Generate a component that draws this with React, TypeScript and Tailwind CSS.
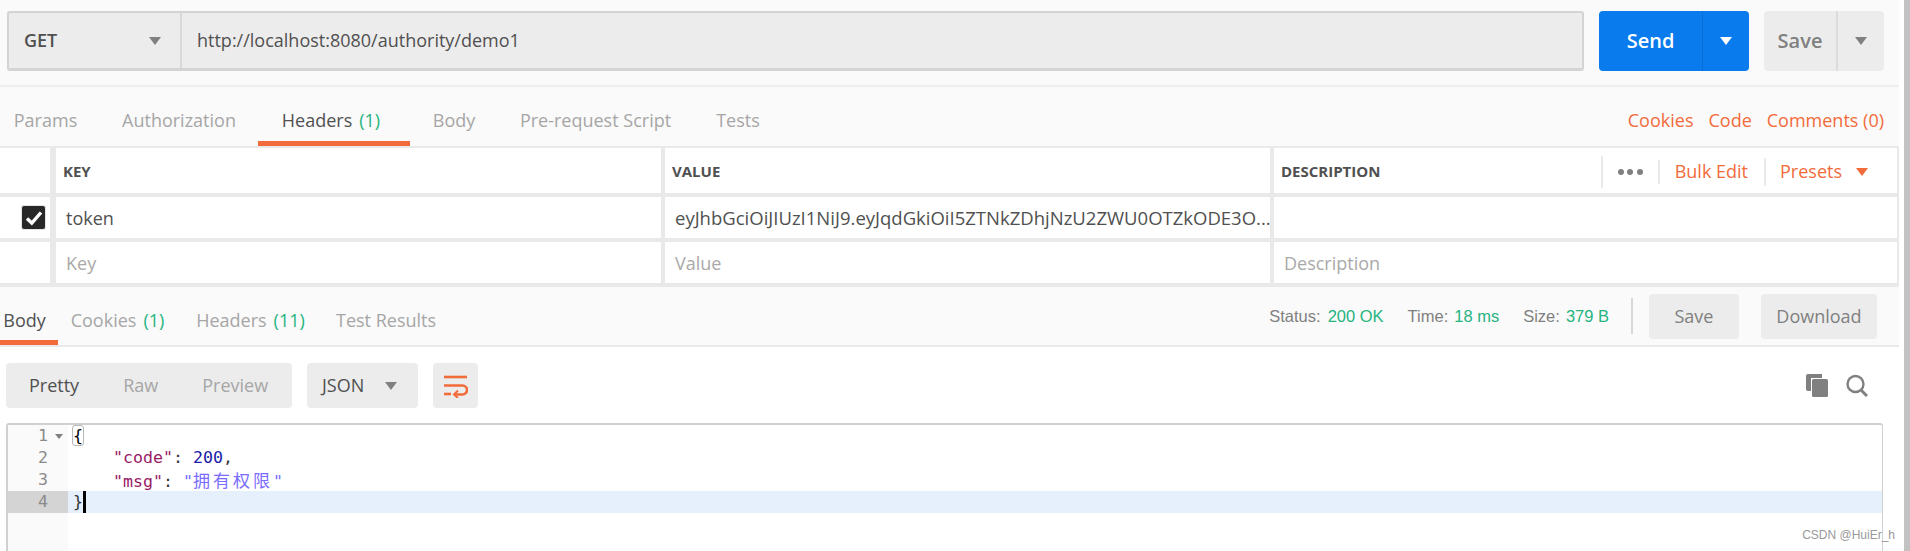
import React from "react";

function Caret({ color, className }: { color: string; className?: string }) {
  return (
    <svg width="12" height="8" viewBox="0 0 12 8" className={className}>
      <path d="M0 0 L12 0 L6 8 Z" fill={color} />
    </svg>
  );
}

function Tab({ label, count, active, className }: { label: string; count?: string; active?: boolean; className: string }) {
  return (
    <div className={`relative flex h-full items-center justify-center whitespace-nowrap pt-[8px] ${active ? "text-[#505050]" : "text-[#a6a6a6]"} ${className}`}>
      <span>{label}</span>
      {count && <span className="ml-[7px] text-[#26b47f]">{count}</span>}
      {active && <div className="absolute bottom-0 left-0 right-0 h-[5px] bg-[#f26b3a]" />}
    </div>
  );
}

function Row({ h, cells }: { h: string; cells: React.ReactNode[] }) {
  return (
    <div className={`flex ${h}`}>
      <div className="flex w-[50px] items-center justify-end bg-white pr-[4px]">{cells[0]}</div>
      <div className="ml-[6px] flex w-[605px] items-center bg-white pl-[10px] pt-[1px]">{cells[1]}</div>
      <div className="ml-[4px] flex w-[605px] items-center bg-white pl-[10px] pt-[1px]">{cells[2]}</div>
      <div className="ml-[4px] flex w-[623px] items-center bg-white pl-[10px] pt-[1px]">{cells[3]}</div>
    </div>
  );
}

function Head({ children }: { children: React.ReactNode }) {
  return <span className="text-[15px] font-bold text-[#505050]">{children}</span>;
}

export default function App() {
  return (
    <div className="relative flex h-[551px] w-[1910px] overflow-hidden bg-white text-[18px] [font-family:'Open_Sans',sans-serif]">
      <div className="w-[1899px] shrink-0">
        {/* URL bar */}
        <div className="flex h-[87px] border-b-2 border-[#efefef] bg-[#fafafa] pl-[7px] pt-[11px]">
          <div className="flex h-[60px] w-[1577px] rounded-[3px] border-2 border-b-[3px] border-[#d4d4d4] bg-[#ececec] text-[#505050]">
            <div className="flex w-[173px] items-center justify-between border-r-2 border-[#d8d8d8] pl-[15px] pr-[19px] font-semibold">
              <span>GET</span>
              <Caret color="#808080" />
            </div>
            <div className="flex items-center pl-[15px] text-[#505050]">http://localhost:8080/authority/demo1</div>
          </div>
          <div className="ml-[15px] flex h-[60px] w-[150px] rounded-[4px] bg-[#097bed] text-white">
            <div className="flex w-[104px] items-center justify-center border-r border-[#0a6fd4] text-[20px] font-semibold">Send</div>
            <div className="flex flex-1 items-center justify-center"><Caret color="#ffffff" /></div>
          </div>
          <div className="ml-[15px] flex h-[60px] w-[120px] rounded-[4px] bg-[#ececec] text-[#808080]">
            <div className="flex w-[74px] items-center justify-center border-r-2 border-[#dcdcdc] text-[20px] font-semibold">Save</div>
            <div className="flex flex-1 items-center justify-center"><Caret color="#808080" /></div>
          </div>
        </div>

        {/* Request tabs */}
        <div className="flex h-[61px] items-stretch border-b-[2px] border-[#e9e9e9] bg-[#fafafa]">
          <Tab label="Params" className="ml-[14px] w-[63px]" />
          <Tab label="Authorization" className="ml-[45px] w-[114px]" />
          <Tab label="Headers" count="(1)" active className="ml-[22px] w-[152px] pr-[6px]" />
          <Tab label="Body" className="ml-[23px] w-[42px]" />
          <Tab label="Pre-request Script" className="ml-[45px] w-[151px]" />
          <Tab label="Tests" className="ml-[45px] w-[44px]" />
          <div className="ml-auto flex items-center pr-[15px] pt-[8px] text-[#f26b3a]">
            <span>Cookies</span>
            <span className="ml-[15px]">Code</span>
            <span className="ml-[15px]">Comments (0)</span>
          </div>
        </div>

        {/* Headers table */}
        <div className="flex flex-col gap-[4px] bg-[#e9e9e9] pb-[4px]">
          <div className="flex h-[45px]">
            <div className="w-[50px] bg-white" />
            <div className="ml-[6px] flex w-[605px] items-center bg-white pl-[7px] pt-[2px]"><Head>KEY</Head></div>
            <div className="ml-[4px] flex w-[605px] items-center bg-white pl-[7px] pt-[2px]"><Head>VALUE</Head></div>
            <div className="ml-[4px] flex w-[623px] items-center bg-white pl-[7px] pt-[2px]">
              <Head>DESCRIPTION</Head>
              <div className="ml-auto h-[32px] w-[2px] bg-[#e9e9e9]" />
              <div className="ml-[15px] flex w-[25px] justify-between">
                <span className="h-[6px] w-[6px] rounded-full bg-[#808080]" />
                <span className="h-[6px] w-[6px] rounded-full bg-[#808080]" />
                <span className="h-[6px] w-[6px] rounded-full bg-[#808080]" />
              </div>
              <div className="ml-[15px] h-[24px] w-[2px] bg-[#e9e9e9]" />
              <span className="ml-[15px] text-[#f26b3a]">Bulk Edit</span>
              <div className="ml-[16px] h-[28px] w-[2px] bg-[#e9e9e9]" />
              <span className="ml-[14px] text-[#f26b3a]">Presets</span>
              <Caret color="#f26b3a" className="ml-[14px] mr-[29px]" />
            </div>
          </div>
          <Row
            h="h-[41px]"
            cells={[
              <div className="flex h-[25px] w-[25px] items-center justify-center rounded-[3px] border border-[#e5e5e5] bg-[#282828]">
                <svg width="18" height="16" viewBox="0 0 18 16"><path d="M2 8.5 L6.8 13 L16 2.5" fill="none" stroke="#fff" strokeWidth="3.4" /></svg>
              </div>,
              <span className="text-[#505050]">token</span>,
              <span className="whitespace-nowrap text-[18.5px] text-[#505050]">eyJhbGciOiJIUzI1NiJ9.eyJqdGkiOiI5ZTNkZDhjNzU2ZWU0OTZkODE3O...</span>,
              null,
            ]}
          />
          <Row
            h="h-[41px]"
            cells={[
              null,
              <span className="text-[#a9a9a9]">Key</span>,
              <span className="text-[#a9a9a9]">Value</span>,
              <span className="text-[#a9a9a9]">Description</span>,
            ]}
          />
        </div>

        {/* Response tabs */}
        <div className="flex h-[60px] items-stretch border-b-[2px] border-[#e9e9e9] bg-[#fafafa]">
          <Tab label="Body" active className="w-[58px] pr-[9px]" />
          <Tab label="Cookies" count="(1)" className="ml-[12px] w-[95px]" />
          <Tab label="Headers" count="(11)" className="ml-[31px] w-[109px]" />
          <Tab label="Test Results" className="ml-[31px] w-[100px]" />
          <div className="ml-auto flex items-center pr-[22px] text-[16.5px] [font-family:'Liberation_Sans',sans-serif]">
            <span className="text-[#808080]">Status:</span>
            <span className="ml-[7px] text-[#26b47f]">200 OK</span>
            <span className="ml-[24px] text-[#808080]">Time:</span>
            <span className="ml-[6px] text-[#26b47f]">18 ms</span>
            <span className="ml-[24px] text-[#808080]">Size:</span>
            <span className="ml-[6px] text-[#26b47f]">379 B</span>
            <div className="ml-[22px] h-[36px] w-[2px] bg-[#d8d8d8]" />
            <div className="ml-[16px] flex h-[45px] w-[90px] items-center justify-center rounded-[4px] bg-[#ececec] text-[18px] text-[#808080] [font-family:'Open_Sans',sans-serif]">Save</div>
            <div className="ml-[22px] flex h-[45px] w-[116px] items-center justify-center rounded-[4px] bg-[#ececec] text-[18px] text-[#808080] [font-family:'Open_Sans',sans-serif]">Download</div>
          </div>
        </div>

        {/* Viewer toolbar */}
        <div className="flex h-[76px] items-center pb-[15px] pl-[6px] pr-[31px] pt-[16px]">
          <div className="flex h-[45px] w-[286px] items-center rounded-[4px] bg-[#ececec]">
            <span className="ml-[23px] text-[#505050]">Pretty</span>
            <span className="ml-[44px] text-[#a6a6a6]">Raw</span>
            <span className="ml-[44px] text-[#a6a6a6]">Preview</span>
          </div>
          <div className="ml-[15px] flex h-[45px] w-[111px] items-center justify-between rounded-[4px] bg-[#ececec] pl-[15px] pr-[21px] text-[#505050]">
            <span>JSON</span>
            <Caret color="#808080" />
          </div>
          <div className="ml-[15px] flex h-[45px] w-[45px] items-center justify-center rounded-[4px] bg-[#ececec]">
            <svg width="25" height="24" viewBox="0 0 25 24" fill="none" stroke="#f26b3a" strokeWidth="2.6">
              <path d="M1 3 H24" />
              <path d="M1 11.5 H19.5 A4.5 4.5 0 0 1 19.5 20.5 H12" />
              <path d="M1 20 H8" />
              <path d="M15 16.5 L11 20.5 L15 24" strokeWidth="2" />
            </svg>
          </div>
          <div className="ml-auto flex items-center gap-[18px]">
            <svg width="22" height="23" viewBox="0 0 22 23">
              <path d="M2 0 H16 V4 H5 V17 H2 Q0 17 0 15 V2 Q0 0 2 0 Z" fill="#808080" />
              <rect x="6" y="5" width="16" height="18" rx="1.5" fill="#808080" />
            </svg>
            <svg width="22" height="23" viewBox="0 0 22 23" fill="none" stroke="#808080" strokeWidth="2.4">
              <circle cx="9.5" cy="10" r="8" />
              <path d="M15 16 L21 22" strokeWidth="3" />
            </svg>
          </div>
        </div>

        {/* Code editor */}
        <div className="ml-[6px] flex h-[128px] w-[1877px] rounded-t-[3px] border-l-2 border-r border-t-2 border-[#d0d0d0] text-[16.6px] leading-[22px] [font-family:'DejaVu_Sans_Mono',monospace]">
          <div className="w-[60px] shrink-0 bg-[#fafafa] text-[#8a8a8a]">
            <div className="flex h-[22px] items-center pl-[30px]">1<svg width="8" height="5" viewBox="0 0 8 5" className="ml-[7px]"><path d="M0 0 H8 L4 5 Z" fill="#808080" /></svg></div>
            <div className="h-[22px] pl-[30px]">2</div>
            <div className="h-[22px] pl-[30px]">3</div>
            <div className="h-[22px] bg-[#d4d4d4] pl-[30px]">4</div>
          </div>
          <div className="flex-1">
            <div className="h-[22px] pl-[5px]"><span className="rounded-[2px] outline outline-1 outline-[#b8b8b8]">{"{"}</span></div>
            <div className="h-[22px] whitespace-pre pl-[5px] text-[#333]">{"    "}<span className="text-[#981a66]">"code"</span>: <span className="text-[#1a1aa6]">200</span>,</div>
            <div className="h-[22px] whitespace-pre pl-[5px] text-[#333]">{"    "}<span className="text-[#981a66]">"msg"</span>: <span className="text-[#7a6cff]">"<span className="text-[17px] tracking-[3px] [font-family:'Noto_Sans_CJK_SC',sans-serif]">拥有权限</span>"</span></div>
            <div className="flex h-[22px] bg-[#e6f0fc] pl-[5px] text-[#333]"><span>{"}"}</span><span className="h-[22px] w-[3px] bg-black" /></div>
          </div>
        </div>
      </div>

      {/* Scrollbar */}
      <div className="ml-[5px] w-[6px] bg-[#c2c2c2]" />

      {/* Watermark */}
      <div className="absolute right-[15px] top-[527px] text-[12px] leading-[16px] text-[#999999] [font-family:'Liberation_Sans',sans-serif]">CSDN @HuiEr_h</div>
    </div>
  );
}
